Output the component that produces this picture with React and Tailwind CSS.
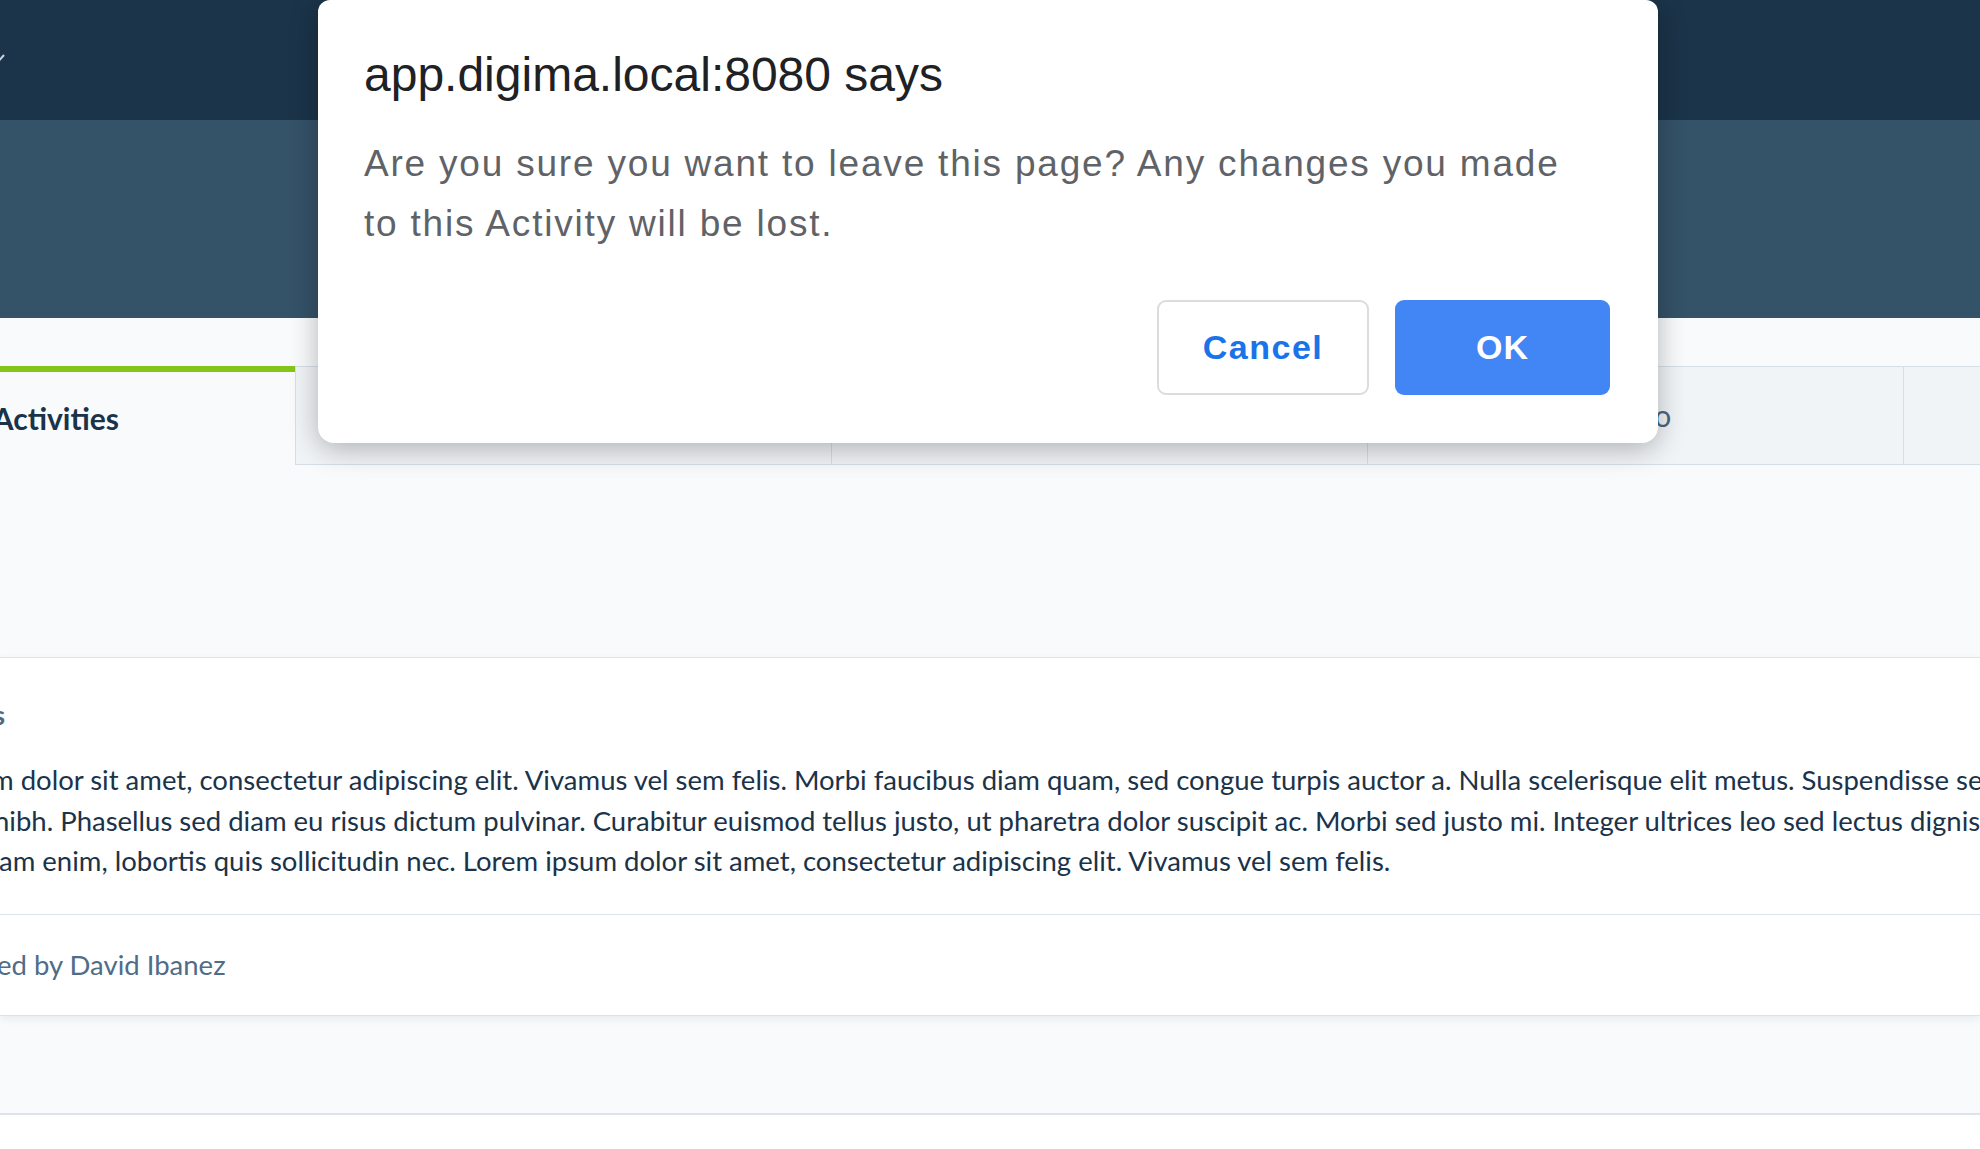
import { useState } from "react";

const tabs = ["Activities", "Overview", "Settings", "Video", "Reports"];

function App() {
  const [active] = useState(0);

  return (
    <div
      className="relative h-[1149px] w-full overflow-hidden bg-[#f8fafc]"
      style={{ fontFamily: "Lato, 'Liberation Sans', sans-serif" }}
    >
      {/* TOP BAR */}
      <div className="flex h-[120px] items-center bg-[#1b3449]">
        <svg
          width="16"
          height="12"
          viewBox="0 0 16 12"
          className="ml-[-11px] mt-[-2px]"
          fill="none"
          stroke="#c9d4de"
          strokeWidth="2"
        >
          <path d="M1 2l7 8 7-8" />
        </svg>
      </div>

      {/* BAND */}
      <div className="h-[198px] bg-[#345268]" />

      {/* TABS */}
      <div className="flex pt-[48px]">
        {tabs.map((t, i) =>
          i === active ? (
            <div
              key={t}
              className="flex h-[99px] w-[295px] shrink-0 items-center justify-end border-t-[6px] border-[#84c51a] bg-[#f8fafc] pr-[176px]"
            >
              <span className="text-[30px] font-bold text-[#1b3349]">{t}</span>
            </div>
          ) : (
            <div
              key={t}
              className="flex h-[99px] w-[536px] shrink-0 items-center border border-r-0 border-[#d6dee6] bg-[#f1f4f7] pl-[226px]"
            >
              <span className="text-[30px] text-[#4a6680]">{t}</span>
            </div>
          )
        )}
      </div>

      <div className="h-[192px]" />

      {/* CARD */}
      <div className="border-y border-[#dde3ea] bg-white shadow-[0_3px_8px_rgba(30,50,70,0.07)]">
        <div className="pt-[40px]">
          <h3 className="ml-[-7px] text-[27.5px] font-bold leading-[34px] text-[#4d6b87]">s</h3>
          <div className="mt-[28px] whitespace-nowrap text-[27.5px] leading-[40.5px] text-[#1b3349]">
            <p className="ml-[-9px]">
              m dolor sit amet, consectetur adipiscing elit. Vivamus vel sem felis. Morbi faucibus diam quam, sed congue turpis auctor a. Nulla scelerisque elit metus. Suspendisse sed
            </p>
            <p className="ml-[-6px]">
              nibh. Phasellus sed diam eu risus dictum pulvinar. Curabitur euismod tellus justo, ut pharetra dolor suscipit ac. Morbi sed justo mi. Integer ultrices leo sed lectus dignissim
            </p>
            <p className="ml-[-1px]">
              am enim, lobortis quis sollicitudin nec. Lorem ipsum dolor sit amet, consectetur adipiscing elit. Vivamus vel sem felis.
            </p>
          </div>
        </div>
        <div className="mt-[32px] flex h-[101px] items-center border-t border-[#dde3ea]">
          <span className="ml-[-3px] text-[27.5px] text-[#4f6c88]">ed by David Ibanez</span>
        </div>
      </div>

      <div className="h-[97px]" />
      <div className="h-[40px] border-t-2 border-[#dde3ea] bg-white" />

      {/* ALERT DIALOG */}
      <div
        className="absolute left-[318px] top-0 w-[1340px] rounded-b-[16px] rounded-t-[12px] bg-white px-[46px] pb-[48px] pt-[47px] pr-[48px] shadow-[0_6px_28px_rgba(0,0,0,0.28)]"
        style={{ fontFamily: "'Liberation Sans', Arial, sans-serif" }}
      >
        <h2 className="text-[48px] leading-[56px] text-[#202124]">app.digima.local:8080 says</h2>
        <p className="mt-[31px] text-[37px] leading-[60px] tracking-[1.8px] text-[#5f6368]">
          Are you sure you want to leave this page? Any changes you made
          <br />
          to this Activity will be lost.
        </p>
        <div className="mt-[46px] flex justify-end gap-[26px]">
          <button className="h-[95px] w-[212px] rounded-[9px] border-2 border-[#dadce0] bg-white text-[34px] font-bold tracking-[1.5px] text-[#1a73e8]">
            Cancel
          </button>
          <button className="h-[95px] w-[215px] rounded-[9px] bg-[#4285f4] text-[34px] font-bold tracking-[1px] text-white">
            OK
          </button>
        </div>
      </div>
    </div>
  );
}

export default App;
